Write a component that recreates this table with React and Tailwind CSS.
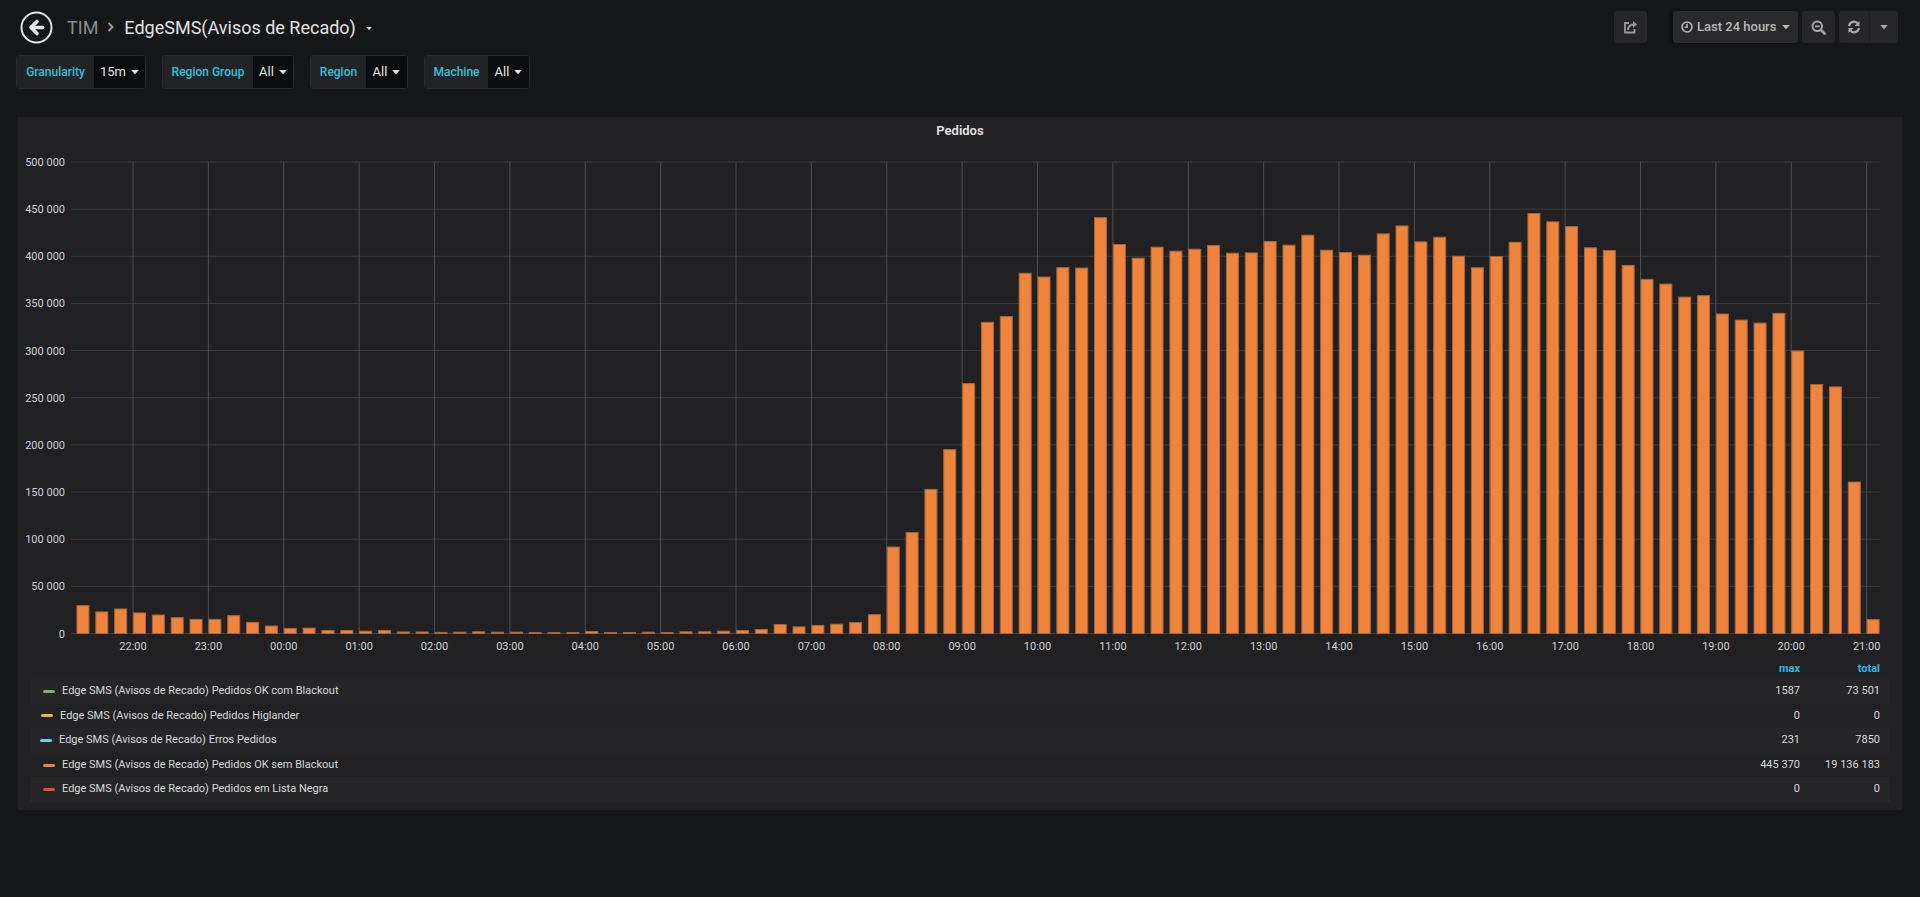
import React from "react";

// Pedidos per 15 minutes, in thousands, from 21:15 to 21:00
const values = [
  29.6, 22.9, 26, 21.8, 19.6, 16.8, 15, 15, 18.9, 11.8, 7.9, 5.4, 5.7, 3.2, 3.2,
  2.5, 3.2, 1.6, 1.6, 1.2, 1.4, 1.8, 1.4, 1.4, 1.0, 1.0, 1.0, 2.1, 1.0, 1.0, 1.4,
  1.0, 1.8, 1.8, 2.5, 3.2, 4.2, 9.5, 7.0, 8.5, 9.9, 11.6, 20,
  91.7, 107, 152.8, 195, 265, 330, 336, 382, 378, 388, 387.5, 441, 412.5, 398,
  409.7, 405.4, 407.5, 411.5, 403.3, 403.6, 415.7, 411.8, 422.4, 406.5, 404,
  401.2, 423.8, 432.2, 415.3, 420.2, 400.1, 387.8, 399.8, 414.9, 445.4, 436.5,
  431.5, 409, 406.2, 390.3, 375.5, 370.5, 356.7, 358.2, 338.8, 332.4, 329.2,
  339.5, 299.6, 264, 261.5, 160.6, 14.8,
];

const hours = [
  "22:00", "23:00", "00:00", "01:00", "02:00", "03:00", "04:00", "05:00",
  "06:00", "07:00", "08:00", "09:00", "10:00", "11:00", "12:00", "13:00",
  "14:00", "15:00", "16:00", "17:00", "18:00", "19:00", "20:00", "21:00",
];

const legend = [
  { name: "Edge SMS (Avisos de Recado) Pedidos OK com Blackout", color: "bg-[#7eb26d]", max: "1587", total: "73 501", shift: "ml-[13px]" },
  { name: "Edge SMS (Avisos de Recado) Pedidos Higlander", color: "bg-[#eab839]", max: "0", total: "0", shift: "ml-[11px]" },
  { name: "Edge SMS (Avisos de Recado) Erros Pedidos", color: "bg-[#6ed0e0]", max: "231", total: "7850", shift: "ml-[10px]" },
  { name: "Edge SMS (Avisos de Recado) Pedidos OK sem Blackout", color: "bg-[#ef843c]", max: "445 370", total: "19 136 183", shift: "ml-[13px]" },
  { name: "Edge SMS (Avisos de Recado) Pedidos em Lista Negra", color: "bg-[#e24d42]", max: "0", total: "0", shift: "ml-[13px]" },
];

const variables = [
  { label: "Granularity", value: "15m", labelW: "w-[77px]", valueW: "w-[51px]" },
  { label: "Region Group", value: "All", labelW: "w-[90px]", valueW: "w-[40px]" },
  { label: "Region", value: "All", labelW: "w-[55px]", valueW: "w-[41px]" },
  { label: "Machine", value: "All", labelW: "w-[63px]", valueW: "w-[41px]" },
];

// chart geometry, relative to the panel's left edge
const PLOT_LEFT = 54;
const PLOT_RIGHT = 1863;
const HOUR = 75.375;
const FIRST_HOUR_X = 116;
const TOP_Y = 18;
const ZERO_Y = 489.5;

function yFor(v) {
  return ZERO_Y - (v / 500) * (ZERO_Y - TOP_Y);
}

function Caret({ className = "", size = 8 }) {
  return (
    <svg width={size} height={size * 0.6} viewBox="0 0 8 5" className={className}>
      <path d="M0 0 L8 0 L4 4.5 Z" fill="currentColor" />
    </svg>
  );
}

function Chart() {
  const ticks = [500, 450, 400, 350, 300, 250, 200, 150, 100, 50, 0];

  return (
    <svg width="1886" height="516" className="block">
      {ticks.map((t) => (
        <g key={t}>
          <line x1={PLOT_LEFT} x2={PLOT_RIGHT} y1={yFor(t)} y2={yFor(t)} stroke="#3d3d40" strokeWidth="1" />
          <text x="48" y={yFor(t) + 4} textAnchor="end" fontSize="11" fill="#d0d1d2" fontFamily="Roboto, sans-serif">
            {t === 0 ? "0" : `${t} 000`}
          </text>
        </g>
      ))}

      {hours.map((h, i) => {
        const x = FIRST_HOUR_X + i * HOUR;
        return (
          <g key={h}>
            <line x1={x} x2={x} y1={TOP_Y} y2={ZERO_Y} stroke="#4f4f52" strokeWidth="1" />
            <text x={x} y="506" textAnchor="middle" fontSize="11" fill="#d0d1d2" fontFamily="Roboto, sans-serif">
              {h}
            </text>
          </g>
        );
      })}

      {values.map((v, i) => {
        const x = FIRST_HOUR_X + (i - 3) * (HOUR / 4);
        const y = yFor(v);
        return (
          <rect
            key={i}
            x={x + 0.5}
            y={y}
            width="12"
            height={ZERO_Y - y}
            fill="#ef843c"
            stroke="#a9673a"
            strokeWidth="1"
          />
        );
      })}
    </svg>
  );
}

function App() {
  return (
    <div className="min-h-screen bg-[#161719] font-['Roboto',sans-serif] text-[#d8d9da]">
      {/* top navbar */}
      <div className="flex h-[54px] items-center pl-[20px] pr-[22px]">
        <svg width="33" height="33" viewBox="0 0 33 33">
          <circle cx="16.5" cy="16.5" r="15" fill="none" stroke="#e4e4e4" strokeWidth="2" />
          <path d="M17 10.5 L11 16.5 L17 22.5" fill="none" stroke="#e4e4e4" strokeWidth="3.6" strokeLinecap="round" strokeLinejoin="round" />
          <path d="M11.5 16.5 H22.5" stroke="#e4e4e4" strokeWidth="3.6" strokeLinecap="round" />
        </svg>

        <span className="ml-[14px] text-[18px] text-[#8e8e8e]">TIM</span>
        <svg width="8" height="10" viewBox="0 0 8 10" className="ml-[9px] mr-[9px]">
          <path d="M1.5 1 L5.5 5 L1.5 9" fill="none" stroke="#9a9a9a" strokeWidth="2" />
        </svg>
        <span className="text-[18px] text-[#e3e3e3]">EdgeSMS(Avisos de Recado)</span>
        <Caret size={6} className="ml-[10px] mt-[4px] text-[#d8d9da]" />

        <div className="ml-auto flex items-center">
          <button className="flex h-[32px] w-[33px] items-center justify-center rounded-[3px] bg-[#27272a] text-[#9a9a9a]">
            <svg width="15" height="14" viewBox="0 0 15 14">
              <path d="M6 3 H2 V12.5 H11.5 V9" fill="none" stroke="currentColor" strokeWidth="1.8" />
              <path d="M5 10 C5 6 7.5 4.5 11 4.5" fill="none" stroke="currentColor" strokeWidth="2" />
              <path d="M10 1 L14 4.5 L10 8 Z" fill="currentColor" />
            </svg>
          </button>

          <button className="ml-[26px] flex h-[32px] w-[125px] items-center rounded-[3px] bg-[#2a2a2d] pl-[8px] text-[13px] font-medium text-[#b9b9b9] shadow-[-3px_0_4px_rgba(0,0,0,0.45)]">
            <svg width="12" height="12" viewBox="0 0 12 12">
              <circle cx="6" cy="6" r="5" fill="none" stroke="currentColor" strokeWidth="1.6" />
              <path d="M6 2.8 V6.3 H3.6" fill="none" stroke="currentColor" strokeWidth="1.5" />
            </svg>
            <span className="ml-[4px]">Last 24 hours</span>
            <Caret className="ml-[6px]" />
          </button>

          <button className="ml-[4px] flex h-[32px] w-[33px] items-center justify-center rounded-[3px] bg-[#27272a] text-[#a8a8a8]">
            <svg width="15" height="15" viewBox="0 0 15 15">
              <circle cx="6.3" cy="6.3" r="4.8" fill="none" stroke="currentColor" strokeWidth="2" />
              <path d="M4 6.3 H8.6" stroke="currentColor" strokeWidth="1.8" />
              <path d="M9.8 9.8 L13.5 13.5" stroke="currentColor" strokeWidth="2.6" strokeLinecap="round" />
            </svg>
          </button>

          <div className="ml-[4px] flex h-[32px] rounded-[3px] bg-[#27272a] text-[#a8a8a8]">
            <button className="flex w-[31px] items-center justify-center border-r border-[#1f1f21]">
              <svg width="14" height="14" viewBox="0 0 14 14">
                <path d="M2 6 A5 5 0 0 1 11 3.8" fill="none" stroke="currentColor" strokeWidth="2.2" />
                <path d="M12.5 1 V6 H7.5 Z" fill="currentColor" />
                <path d="M12 8 A5 5 0 0 1 3 10.2" fill="none" stroke="currentColor" strokeWidth="2.2" />
                <path d="M1.5 13 V8 H6.5 Z" fill="currentColor" />
              </svg>
            </button>
            <button className="flex w-[28px] items-center justify-center">
              <Caret />
            </button>
          </div>
        </div>
      </div>

      {/* template variables */}
      <div className="ml-[16px] mt-[1px] flex gap-[16px]">
        {variables.map((v) => (
          <div key={v.label} className="flex h-[34px] overflow-hidden rounded-[3px] border border-[#2a2b2e]">
            <div className={`${v.labelW} flex items-center justify-center bg-[#222326] text-[12px] font-medium text-[#33c0dc]`}>
              {v.label}
            </div>
            <div className={`${v.valueW} flex items-center justify-center gap-[5px] bg-[#0b0c0e] text-[13px] text-[#e3e3e3]`}>
              {v.value}
              <Caret />
            </div>
          </div>
        ))}
      </div>

      {/* graph panel */}
      <div className="mx-[17px] mt-[28px] h-[693px] rounded-[2px] bg-[#212124]">
        <div className="flex h-[27px] items-center justify-center text-[13px] font-semibold text-[#e3e3e3]">
          Pedidos
        </div>

        <Chart />

        <div className="mx-[13px]">
          <div className="flex h-[19px] items-center text-[11px] font-bold text-[#33b5e5]">
            <span className="ml-auto w-[80px] text-right">max</span>
            <span className="w-[90px] pr-[10px] text-right">total</span>
          </div>

          {legend.map((row, i) => (
            <div
              key={row.name}
              className={`flex h-[24.6px] items-center text-[11px] text-[#d8d9da] ${i % 2 === 0 ? "bg-[#262629]" : "bg-[#212124]"}`}
            >
              <span className={`${row.shift} h-[3px] w-[12px] rounded-[2px] ${row.color}`} />
              <span className="ml-[7px]">{row.name}</span>
              <span className="ml-auto w-[100px] text-right">{row.max}</span>
              <span className="w-[90px] pr-[10px] text-right">{row.total}</span>
            </div>
          ))}
        </div>
      </div>
    </div>
  );
}

export default App;
